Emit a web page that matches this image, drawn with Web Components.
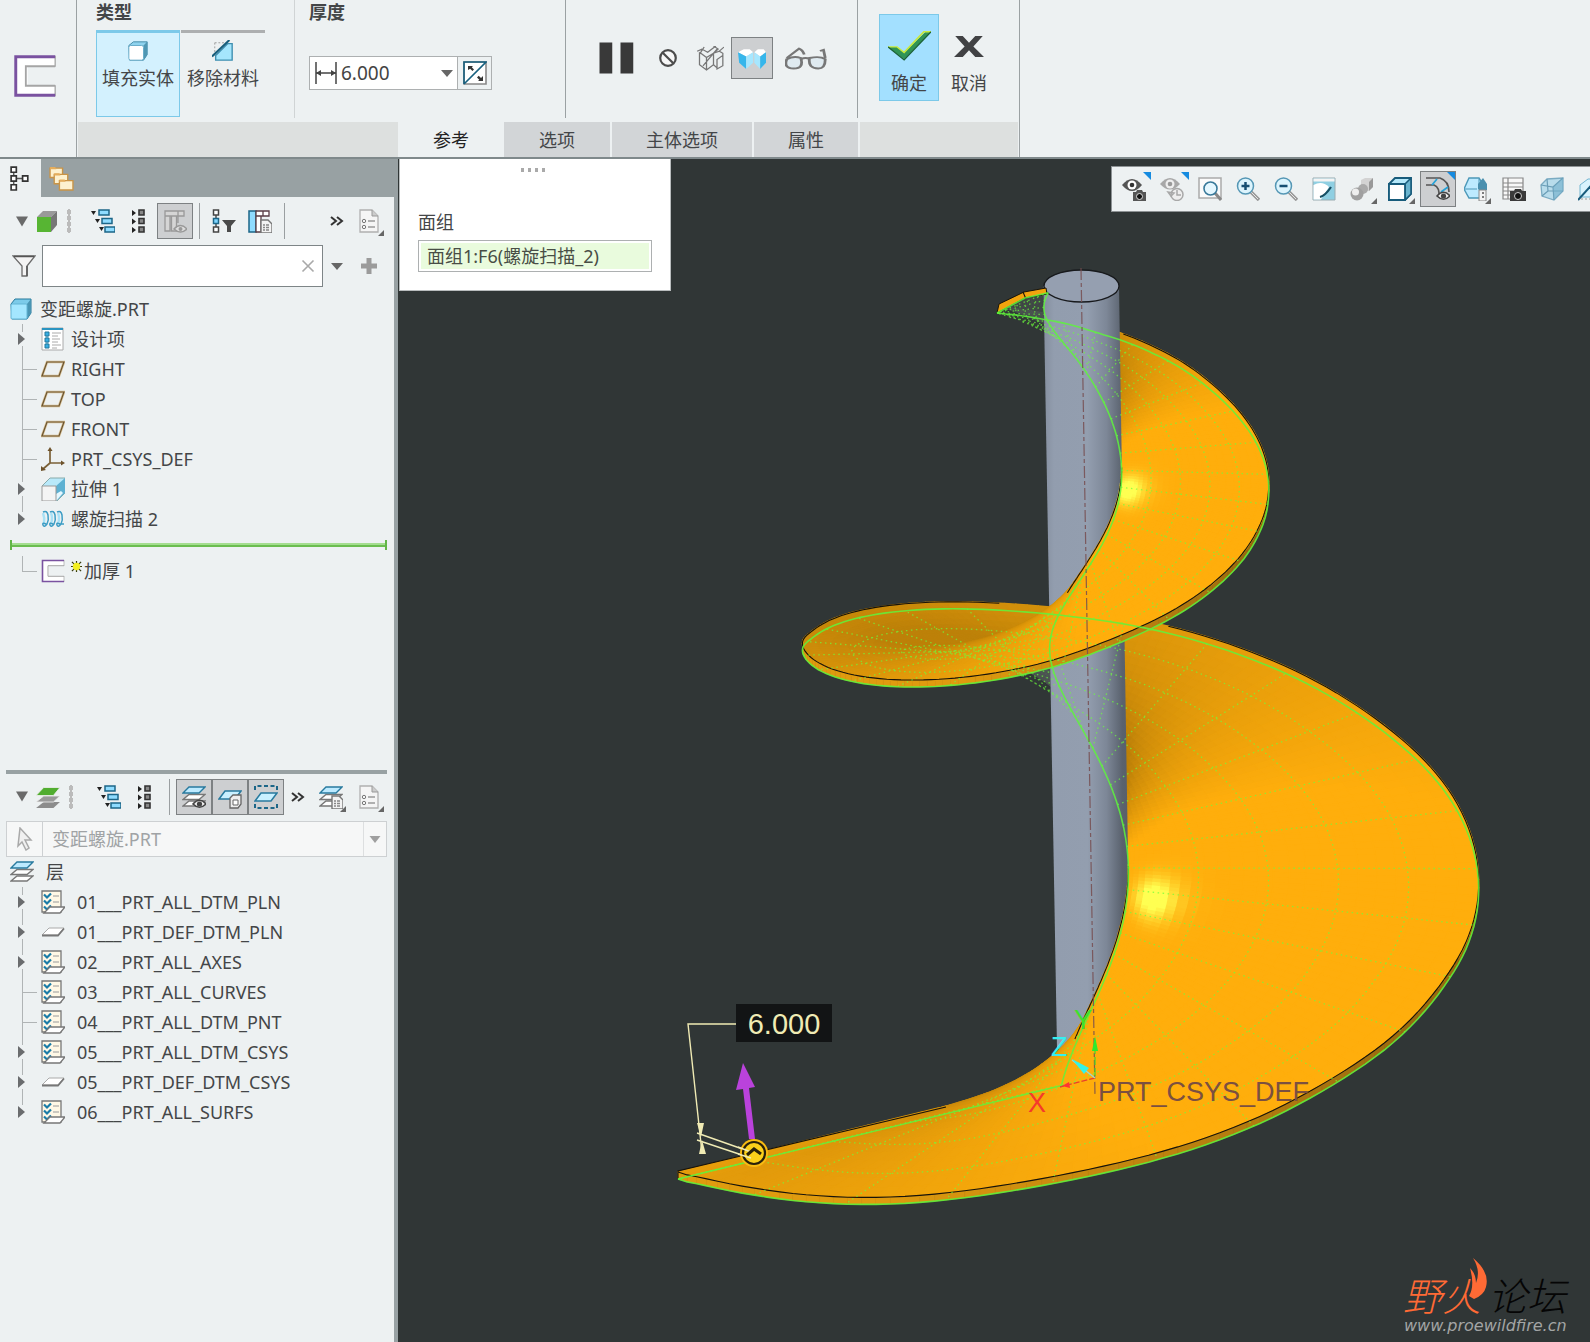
<!DOCTYPE html>
<html lang="zh-CN">
<head>
<meta charset="utf-8">
<title>变距螺旋.PRT</title>
<style>
	html, body {
		margin: 0;
		height: 100%;
	}

	body {
		font: 18px/24px "Noto Sans", "Noto Sans CJK SC", sans-serif;
		color: #444648;
		background: #edf1f2;
	}
</style>
</head>
<body>
<cad-app>
	<cad-ribbon slot="ribbon"></cad-ribbon>
	<cad-navigator slot="navigator"></cad-navigator>
	<cad-viewport slot="view"></cad-viewport>
</cad-app>

<script>
const LAYER_SHEETS = (top, edge) => `
	<path d="M1 21l6-5h16l-6 5z" fill="#fff" stroke="#777" stroke-width="1.4"/>
	<path d="M1 14.5l6-5h16l-6 5z" fill="#fff" stroke="#777" stroke-width="1.4"/>
	<path d="M1 8l6-6h16l-6 6z" fill="${top}" stroke="${edge}" stroke-width="1.4"/>`;

const DOC_BADGE = `
	<path d="M13 11h7l4 4v9H13z" fill="#f3f3f3" stroke="#777" stroke-width="1.4"/>
	<path d="M15 16h2m1 0h3m-6 2.5h2m1 0h3M15 21h2m1 0h3" stroke="#888" stroke-width="1.3"/>`;

const EYE_BADGE = `
	<path d="M11 19q6.5-7.5 13 0q-6.5 6.5-13 0z" fill="#eee" stroke="#444" stroke-width="1.6"/>
	<circle cx="17.5" cy="19" r="2.6" fill="#444"/>`;

const THICKEN = `
	<path d="M1 1h22v6H8v10h15v6H1z" fill="#fff"/>
	<path d="M23 6.7H7v10.6h16" fill="none" stroke="#a5a5a5"/>
	<path d="M23 1v6M23 17v6" stroke="#a5a5a5" stroke-width=".7"/>
	<path d="M23 1.5H1.5v21H23" fill="none" stroke="#7a52a0" stroke-width="1.6"/>`;

const ICONS = {
	thicken: THICKEN,
	solid: `
		<path d="M2 6l5-4h15v14l-4 6H3z" fill="#8fd3ee" stroke="#3f87a4"/>
		<path d="M18 6l4-4v14l-4 6z" fill="#4f97b3"/>
		<rect x="2" y="6" width="16" height="16" rx="2" fill="#fff" stroke="#62a9c6"/>`,
	remove: `
		<path d="M3 3h13M3 3v14" fill="none" stroke="#999" stroke-dasharray="2 2"/>
		<path d="M4 22V17L17 4h5v18z" fill="#a5e6fd" stroke="#3f8fb0" stroke-width="1.5"/>
		<path d="M0 18L19 0" stroke="#175d7b" stroke-width="2.2"/>`,
	thickness: `
		<path d="M2 1v22M22 1v22M2 12h20" fill="none" stroke="#444" stroke-width="1.5"/>
		<path d="M2 12l5-3v6zM22 12l-5-3v6z" fill="#444"/>`,
	flip: `
		<path d="M1 1h22v22H1z" fill="#fff" stroke="#888" stroke-width="1.6"/>
		<path d="M1 23V1h22L1 23" fill="none" stroke="#17607f" stroke-width="1.6"/>
		<path d="M5 5h5L8.8 6.2l2.2 2.2-1.6 1.6-2.2-2.2L5 9zM20 20h-5l1.3-1.3L14 16.5l1.7-1.7 2.3 2.3L20 15z" fill="#333"/>`,
	pause: `<path d="M1 1h8.5v22H1zM15 1h8.5v22H15z" fill="#393939"/>`,
	none: `
		<circle cx="12" cy="12" r="8.5" fill="#f7f7f7" stroke="#4c4c4c" stroke-width="2.4"/>
		<path d="M6.5 6.5l11 11" stroke="#4c4c4c" stroke-width="2.4"/>`,
	wire: `
		<path d="M1 5l4-2 5 3 7-6M3 6v12l6 5 6-5V7M9 11v12M3 6l6 5 6-4 4-4-4-3M15 7l5-2 3 2v12l-5 3v-9l5-4M15 7v11l3 3M6 19l12-16M7 1l-4 7M20 5l4-4" fill="none" stroke="#777" stroke-width="1.1"/>`,
	facets: `
		<path d="M0 6l5-3h5l3 3-6 4z" fill="#fff"/><path d="M0 6l7 4v12l-6-6z" fill="#36b6eb"/><path d="M7 10l6-4v10l-6 6z" fill="#a6e7ff"/>
		<path d="M14 6l3-3h5l2 3-5 4z" fill="#fff"/><path d="M14 6l5 4v12l-5-6z" fill="#a6e7ff"/><path d="M19 10l5-4v10l-5 6z" fill="#36b6eb"/>`,
	glasses: `
		<path d="M1 13q4-3 8-1 2 9-4 9t-4-8zM14 12q6-2 9 1 0 8-4 8-6 0-5-9z" fill="#dfeaf0" stroke="#777" stroke-width="1.6"/>
		<path d="M9 13q3-2 5 0M1 12l7-8q2 1 3 5M23 12l-1-7-2 1" fill="none" stroke="#777" stroke-width="1.6"/>`,
	check: `
		<path d="M0 13h5l4 4L21 2h3L9 22z" fill="#309456"/>
		<path d="M0 13h5l4 4L20 2h4" fill="none" stroke="#c9ea3d" stroke-width="1"/>
		<path d="M0 13l9 9.5L24 2" fill="none" stroke="#1b6135" stroke-width=".8"/>`,
	cross: `<path d="M1 2h6l5 6.5L17 2h6l-7.5 10L24 22h-7l-5-6.5L7 22H0l8.5-10z" fill="#414244"/>`,
	structure: `
		<path d="M5.5 5v14M5.5 12h12" stroke="#555" stroke-width="1.3"/>
		<path d="M3 1h5v5H3zM3 9.5h5v5H3zM3 18h5v5H3zM14 9.5h5v5h-5z" fill="#fff" stroke="#333" stroke-width="1.6"/>`,
	folders: `
		<path d="M1 2h12v9H1z" fill="#fdf1cf" stroke="#c99446" stroke-width="1.3"/><path d="M1 1h5l1 2H1z" fill="#e5ad5c"/>
		<path d="M5 8h13v9H5z" fill="#fdf1cf" stroke="#c99446" stroke-width="1.3"/><path d="M5 7h5l1 2H5z" fill="#e5ad5c"/>
		<path d="M10 14h13v9H10z" fill="#fdf1cf" stroke="#c99446" stroke-width="1.3"/><path d="M10 13h5l1 2h-6z" fill="#e5ad5c"/>`,
	caret: `<path d="M3 4h18L12 20z" fill="#6a6a6a"/>`,
	smallcaret: `<path d="M6 9h12l-6 7z" fill="#666"/>`,
	greencube: `
		<path d="M2 8l6-6h14l-6 6z" fill="#999"/><path d="M16 8l6-6v14l-6 7z" fill="#777"/>
		<path d="M2 8h14v15H2z" fill="#57b533"/>`,
	expand: `
		<path d="M0 2h5l-2.5 4zM4 10h5l-2.5 4zM8 18h5l-2.5 4z" fill="#222"/>
		<path d="M8 1h10v5H8zM11 9.5h10v5H11zM14 18h10v5H14z" fill="#8fdcff" stroke="#1c6688" stroke-width="1.5"/>`,
	collapse: `
		<path d="M5 1l4 3-4 3zM5 9.5l4 3-4 3zM5 18l4 3-4 3z" fill="#222"/>
		<path d="M12 1h5v5h-5zM12 9.5h5v5h-5zM12 18h5v5h-5z" fill="#888" stroke="#333" stroke-width="1.6"/>`,
	columns: `
		<path d="M2 2h19v5H2zM2 7h5v15H2zM8.5 7h5v15h-5zM15 2v12" fill="#d5d5d5" stroke="#999" stroke-width="1.3"/>
		<path d="M11 20q6.5-7 13 0q-6.5 6-13 0z" fill="#ddd" stroke="#999" stroke-width="1.5"/><circle cx="17.5" cy="20" r="2" fill="#999"/>`,
	treefilter: `
		<path d="M4 5v14" stroke="#444" stroke-width="1.4"/>
		<path d="M1.5 1h5v5h-5zM1.5 18h5v5h-5z" fill="#fff" stroke="#444" stroke-width="1.5"/><path d="M1.5 9.5h5v5h-5z" fill="#7fd6ff" stroke="#1c6688" stroke-width="1.5"/>
		<path d="M10 11h14l-5 6v6h-4v-6z" fill="#4a4a4a"/>`,
	treecolumns: `
		<path d="M1 2h7v21H1z" fill="#8fdcff" stroke="#1c6688" stroke-width="1.5"/>
		<path d="M8 2h13v5H8zM15 2v5M8 7v16h5V7" fill="#fff" stroke="#5a3d45" stroke-width="1.3"/>${DOC_BADGE}`,
	more: `<path d="M6 8l5 4-5 4M12 8l5 4-5 4" fill="none" stroke="#333" stroke-width="2"/>`,
	document: `
		<path d="M3 1h12l6 6v16H3z" fill="#f5f5f5" stroke="#b0b0b0" stroke-width="1.3"/><path d="M15 1v6h6" fill="#ccc" stroke="#999"/>
		<circle cx="7" cy="12" r="1.7" fill="none" stroke="#777"/><circle cx="7" cy="18" r="1.7" fill="none" stroke="#777"/>
		<path d="M11 12h7M11 18h7" stroke="#999" stroke-width="1.6"/>`,
	funnel: `<path d="M1 2h22l-8 10v10H10V12z" fill="#f4f4f4" stroke="#6b6b6b" stroke-width="1.3"/><path d="M2 2.5h20M15 12v10" stroke="#555" stroke-width="1.5"/>`,
	plus: `<path d="M9.5 4h5v5.5H20v5h-5.5V20h-5v-5.5H4v-5h5.5z" fill="#9b9b9b"/>`,
	clear: `<path d="M6 6l12 12M18 6L6 18" stroke="#a9a9a9" stroke-width="1.8"/>`,
	part: `
		<path d="M1 7l4-5h16v14l-4 6H2z" fill="#7ccbe9" stroke="#24789b"/>
		<path d="M17 7l4-5v14l-4 6z" fill="#4995b3"/><rect x="1" y="7" width="16" height="15" rx="1" fill="#a4e7ff" stroke="#62b5d5"/>`,
	design: `
		<path d="M1 1h21v22H1z" fill="#fff" stroke="#aaa"/><path d="M1 2h21" stroke="#2a94c1" stroke-width="2"/>
		<path d="M6 6v13" stroke="#2c8ab3"/><path d="M4 5h4v4H4zM4 11h4v4H4zM4 17h4v4H4z" fill="#36aee3" stroke="#24789b"/>
		<path d="M11 6h9M11 9h6M11 12h8M11 15h6M11 18h9M11 21h5" stroke="#aaa"/>`,
	plane: `<path d="M6 5h17l-5 14H1z" fill="none" stroke="#d8bf90" stroke-width="2.5"/><path d="M6 5h17l-5 14H1z" fill="none" stroke="#6b5533" stroke-width="1.2"/>`,
	csys: `
		<path d="M9 2v14h13M9 16l-7 6" fill="none" stroke="#7b6037" stroke-width="1.7"/>
		<path d="M9 0l2.5 4h-5zM24 16l-4-2.5v5zM0 24v-5l5 4z" fill="#6d522b"/>`,
	extrude: `
		<path d="M1 9l8-8h15v15l-8 8z" fill="#b9e9fa" stroke="#8aa"/><path d="M15 9l9-8v15l-9 8z" fill="#5eb1d2"/><path d="M15 17l5-3 2 2-7 8z" fill="#e6f8ff"/>
		<path d="M1 9h14v15H1z" fill="#f4f4f4" stroke="#999"/>`,
	helix: `
		<path d="M2 6q2 5 1 11M10 6q2 5 0 11M17 6q2 5 0 11" fill="none" stroke="#a8e1f6" stroke-width="2.4"/>
		<path d="M2 5q4-2 5 3t-1 9q-3 4-4 1t3-1M9 5q4-2 5 3t-1 9q-3 4-4 1t3-1M16 5q4-2 5 3t-1 9q-3 4-4 1t3-1l4 0" fill="none" stroke="#3d9dc5" stroke-width="1.5"/>`,
	spark: `<path d="M2 2l20 20M22 2L2 22M12 0v24M0 12h24" stroke="#33380a" stroke-width="2.6"/><circle cx="12" cy="12" r="8" fill="#f3ef21"/>`,
	greenlayers: `
		<path d="M1 23l7-6h15l-6 6z" fill="#8c8c8c"/><path d="M1 17l7-6h15l-6 6z" fill="#999" stroke="#eee" stroke-width=".8"/>
		<path d="M1 10.5l7-8h15l-6 8z" fill="#51ad30" stroke="#eee" stroke-width=".8"/>`,
	layers: LAYER_SHEETS('#bdeaff', '#287a9e'),
	layerseye: LAYER_SHEETS('#bdeaff', '#287a9e') + EYE_BADGE,
	layercube: `
		<path d="M1 14l6-8h16l-6 8z" fill="#c9f0ff" stroke="#287a9e" stroke-width="1.5"/>
		<path d="M12 13l3-3h8v9l-3 4h-8z" fill="#eee" stroke="#666" stroke-width="1.3"/><path d="M15 15h5v5h-5z" fill="#fff" stroke="#666"/>`,
	layerselect: `
		<path d="M1 16l6-8h16l-6 8z" fill="#c9f0ff" stroke="#287a9e" stroke-width="1.5"/>
		<path d="M1 5V1h22v4M1 19v4h22v-4" fill="none" stroke="#1c6688" stroke-width="2" stroke-dasharray="4 2.5"/>`,
	layersdoc: LAYER_SHEETS('#bdeaff', '#287a9e') + DOC_BADGE,
	cursor: `<path d="M7 1l11 12h-6l4 8-3 2-4-8-4 4z" fill="#f0f0f0" stroke="#a9a9a9" stroke-width="1.5"/>`,
	layerlist: `
		<path d="M1 1h19v21H1z" fill="#fff8e6" stroke="#777" stroke-width="1.3"/>
		<path d="M3 4.5l3 3 4-4M3 10.5l3 3 4-4M3 16.5l3 3 4-4" fill="none" stroke="#1a7ca8" stroke-width="2.2"/><path d="M12 6h6M12 12h6" stroke="#999" stroke-width="1.2"/>
		<path d="M3 23l6-6h15l-5 6z" fill="#fff" stroke="#777" stroke-width="1.3"/>`,
	layerplane: `<path d="M1 15l7-7h15l-6 7z" fill="#fff" stroke="#aaa"/><path d="M1 15.5h16l6-7" fill="none" stroke="#777" stroke-width="1.8"/>`,
	eyecamera: `
		<path d="M0 8q10-12 20 0-10 12-20 0z" fill="#555"/><circle cx="10" cy="8" r="4.5" fill="#fff"/><circle cx="10" cy="8" r="2.3" fill="#333"/>
		<path d="M11 15h3l1-2h5l1 2h3v9H11z" fill="#555"/><circle cx="17.5" cy="19.5" r="3" fill="#111" stroke="#ddd"/>`,
	eyehistory: `
		<path d="M0 7q10-12 20 0-10 11-20 0z" fill="#a8a8a8"/><circle cx="10" cy="7" r="4.5" fill="#eee"/><circle cx="10" cy="7" r="2.3" fill="#999"/>
		<circle cx="17" cy="17.5" r="6" fill="#eee" stroke="#a8a8a8" stroke-width="1.5"/><path d="M17 13v5h4M8 15l3 4 3-3z" fill="none" stroke="#a8a8a8" stroke-width="1.5"/>`,
	zoomfit: `
		<path d="M1 1h22v20H1z" fill="#fafafa" stroke="#aaa" stroke-width="1.5"/>
		<path d="M17 16l6 7" stroke="#888" stroke-width="3"/><circle cx="12.5" cy="11.5" r="6.5" fill="#e4f7ff" stroke="#38799a" stroke-width="1.6"/>`,
	zoomin: `
		<path d="M14 14l9 9" stroke="#999" stroke-width="3.5"/><path d="M15 15l7 7" stroke="#e6e6e6"/><circle cx="9.5" cy="9" r="8" fill="#dcf4fd" stroke="#5597b5" stroke-width="1.5"/>
		<path d="M9.5 5v8M5.5 9h8" stroke="#174f73" stroke-width="2.5"/>`,
	zoomout: `
		<path d="M14 14l9 9" stroke="#999" stroke-width="3.5"/><path d="M15 15l7 7" stroke="#e6e6e6"/><circle cx="9.5" cy="9" r="8" fill="#dcf4fd" stroke="#5597b5" stroke-width="1.5"/>
		<path d="M5.5 9h8" stroke="#174f73" stroke-width="2.5"/>`,
	repaint: `
		<path d="M1 1h22v22H1z" fill="#8fcfe2" stroke="#9aabb0"/><path d="M1.5 1.5h21v3h-21z" fill="#f4f4f4"/>
		<path d="M1.5 22.5V8Q10 3 17 10L9 22.5z" fill="#fff"/>
		<path d="M8 20q5-1 11-10" fill="none" stroke="#174f63" stroke-width="2.2"/>`,
	appearance: `
		<path d="M11 3l4-2h8v9l-4 4h-8z" fill="#d3d3d3"/><circle cx="13" cy="12" r="5" fill="#aaa"/><circle cx="7" cy="17" r="6.5" fill="#a0a0a0"/><circle cx="5.5" cy="15" r="3.5" fill="#eee"/>
		<path d="M19 5l4-4v9l-4 4z" fill="#999"/>`,
	shading: `
		<path d="M1 7l6-6h16v16l-6 6H1z" fill="#b4e8fa" stroke="#175b7b" stroke-width="1.8"/><path d="M17 7l6-6v16l-6 6z" fill="#6ab4cf" stroke="#175b7b" stroke-width="1.5"/>
		<path d="M1 7h16v16H1z" fill="#fff" stroke="#175b7b" stroke-width="1.8"/>`,
	annotations: `
		<path d="M0 1h14q9 3 9 14M0 8h8q6 2 5 13" fill="none" stroke="#555" stroke-width="1.7"/><path d="M11 2L6 8M22 10l-7 5" stroke="#25a2d8" stroke-width="1.8"/>${EYE_BADGE}`,
	section: `
		<path d="M0 12L5 1h10l7 11-6 9H5z" fill="#bdeaff" stroke="#4c98b8" stroke-width="1.4"/><path d="M0 12h13M15 2v10" stroke="#4c98b8"/>
		<path d="M14 12V7l5-6 4 6v6h-8z" fill="#4a8fae"/><path d="M15 13h7v11h-7z" fill="#f3f3f3" stroke="#888"/><path d="M18 16h2m-2 4h2" stroke="#555" stroke-width="1.5"/>`,
	tablecamera: `
		<path d="M1 1h20v21H1zM1 6h20M1 10h20M1 14h20M1 18h20M6 1v21" fill="#f8f8f8" stroke="#888" stroke-width="1.2"/>
		<path d="M8 14h4l1-2h6l1 2h4v10H8z" fill="#3a3a3a"/><circle cx="16" cy="19" r="3.5" fill="#111" stroke="#ccc"/>`,
	perspective: `
		<path d="M1 8l6-6 16-1v13l-9 9-12-4z" fill="#b8dceb" stroke="#7babc2" stroke-width="1.3"/><path d="M7 2l1 12 15 0M8 14l-6 5M1 8l12 2 10-9M13 10l1 13" fill="none" stroke="#6a9db6" stroke-width="1.2"/>
		<path d="M13 10l10-9v13l-9 9z" fill="#6faeca" opacity=".6"/>`,
	datum: `
		<path d="M2 8l8-6h14v18H2z" fill="#d9f3fd" stroke="#73b5d1"/><path d="M0 23L18 3" stroke="#185b7c" stroke-width="2"/><path d="M3 22h20" stroke="#999" stroke-dasharray="2 2"/>`
};

class CadElement extends HTMLElement {
	constructor() {
		super();
		this.attachShadow({ mode: 'open' });
	}

	connectedCallback() {
		this.shadowRoot.innerHTML = this.render();
	}
}

class CadIcon extends CadElement {
	render() {
		return `
			<style>
				:host { display: block; flex: none; width: var(--icon-width, 24px); height: var(--icon-height, 24px); }
				svg { display: block; width: 100%; height: 100%; }
			</style>
			<svg viewBox="0 0 24 24" preserveAspectRatio="none" aria-hidden="true">${ICONS[this.getAttribute('name')]}</svg>
		`;
	}
}

class CadTool extends CadElement {
	render() {
		return `
			<style>
				:host { display: block; flex: none; }
				button {
					position: relative;
					display: flex;
					align-items: center;
					justify-content: center;
					box-sizing: border-box;
					width: var(--tool-width, 36px);
					height: var(--tool-height, 36px);
					padding: 0;
					border: 1px solid transparent;
					background: none;
				}
				button[aria-pressed="true"] { border-color: #7d8183; background: #cdcfd1; }
				:host([corner]) button::after {
					content: "";
					position: absolute;
					right: 2px;
					bottom: 2px;
					border: 3px solid transparent;
					border-right-color: #666;
					border-bottom-color: #666;
				}
				:host([corner="new"]) button::after {
					top: 0;
					right: 0;
					bottom: auto;
					border: 4px solid transparent;
					border-top-color: #168be0;
					border-right-color: #168be0;
				}
			</style>
			<button type="button" title="${this.title}" aria-label="${this.title}" aria-pressed="${this.hasAttribute('pressed')}">
				<cad-icon name="${this.getAttribute('icon')}"></cad-icon>
			</button>
		`;
	}
}

class CadCommand extends CadElement {
	render() {
		return `
			<style>
				:host { display: block; width: 84px; height: 87px; --icon-width: 22px; --icon-height: 22px; }
				button {
					display: flex;
					flex-direction: column;
					align-items: center;
					box-sizing: border-box;
					width: 100%;
					height: 100%;
					padding: 7px 0 0;
					border: 0 solid #7cc9e9;
					border-top: 3px solid #adafb0;
					background: none;
					color: inherit;
					font: inherit;
					white-space: nowrap;
				}
				.label { margin-top: 4px; }
				:host([selected]) button {
					border-width: 3px 1px 1px;
					border-color: #7cc9e9;
					background: #d3f1fe;
				}
				:host([kind="confirm"]) { width: 60px; --icon-width: 43px; --icon-height: 33px; }
				:host([kind="confirm"]) button { padding-top: 14px; border: 1px solid transparent; }
				:host([kind="confirm"][selected]) button { border-color: #7cc9e9; background: #a3e0ff; }
				:host([kind="confirm"]) .label { margin-top: 9px; }
				:host([icon="cross"]) { --icon-width: 30px; --icon-height: 25px; }
				:host([icon="cross"]) button { padding-top: 19px; }
				:host([icon="cross"]) .label { margin-top: 12px; }
			</style>
			<button type="button" aria-pressed="${this.hasAttribute('selected')}">
				<cad-icon name="${this.getAttribute('icon')}"></cad-icon>
				<span class="label"><slot></slot></span>
			</button>
		`;
	}
}

class CadRibbon extends CadElement {
	render() {
		return `
			<style>
				:host { display: flex; border-bottom: 2px solid #7f898b; background: #edf1f2; }
				.feature {
					box-sizing: border-box;
					width: 77px;
					padding: 54px 0 0 13px;
					border-right: 1px solid #9ba1a3;
					--icon-width: 44px;
					--icon-height: 44px;
				}
				.dashboard { border-right: 1px solid #9ba1a3; padding: 0 1px; }
				.groups { display: flex; height: 122px; }
				section { box-sizing: border-box; height: 118px; border-right: 1px solid #9ba1a3; }
				section:last-child { border: 0; }
				h2 { margin: 0; font-size: 18px; line-height: 24px; font-weight: 700; }
				.type { padding: 0 29px 0 18px; border-color: #d0d4d5; }
				.choices { display: flex; gap: 1px; margin-top: 6px; }
				.thickness { padding: 0 73px 0 14px; }
				.field {
					display: flex;
					align-items: center;
					box-sizing: border-box;
					width: 183px;
					height: 34px;
					margin-top: 32px;
					border: 1px solid #adb0b1;
					background: #fff;
					--icon-width: 24px;
					--icon-height: 24px;
				}
				.field > cad-icon { margin-left: 4px; }
				.field input {
					flex: 1;
					min-width: 0;
					padding: 0 3px;
					border: 0;
					outline: 0;
					background: none;
					font: inherit;
					font-size: 19px;
					color: #444;
				}
				.field cad-tool { --tool-width: 20px; --tool-height: 32px; }
				.field cad-tool:last-child {
					border-left: 1px solid #adb0b1;
					background: #edf1f2;
					--tool-width: 33px;
				}
				.preview { display: flex; align-items: flex-start; padding: 37px 18px 0 33px; --tool-width: 42px; --tool-height: 42px; }
				.preview cad-tool { --icon-width: 28px; --icon-height: 25px; }
				.preview .pause { margin-right: 14px; --tool-width: 34px; --icon-width: 36px; --icon-height: 34px; }
				.preview .none { --icon-width: 22px; --icon-height: 22px; }
				.preview .glasses { --tool-width: 66px; --icon-width: 42px; --icon-height: 28px; }
				.confirm { display: flex; padding: 14px 19px 0 21px; }
				nav { display: flex; gap: 2px; height: 35px; }
				nav button {
					padding: 0;
					border: 0;
					background: #d2d5d7;
					color: inherit;
					font: inherit;
				}
				nav button[aria-selected="true"] { margin: 0 -2px; background: #edf1f2; color: #222; }
				nav span { background: #dde0df; }
				.lead { width: 320px; }
				.short { width: 106px; }
				.short:last-of-type { width: 104px; }
				.long { width: 140px; }
				.rest { flex: 1; }
			</style>
			<div class="feature"><cad-icon name="thicken"></cad-icon></div>
			<div class="dashboard">
				<div class="groups">
					<section class="type">
						<h2>类型</h2>
						<div class="choices">
							<cad-command icon="solid" selected>填充实体</cad-command>
							<cad-command icon="remove">移除材料</cad-command>
						</div>
					</section>
					<section class="thickness">
						<h2><label for="thickness">厚度</label></h2>
						<div class="field">
							<cad-icon name="thickness"></cad-icon>
							<input id="thickness" type="text" value="6.000">
							<cad-tool icon="smallcaret" title="厚度值"></cad-tool>
							<cad-tool icon="flip" title="反向"></cad-tool>
						</div>
					</section>
					<section class="preview">
						<cad-tool class="pause" icon="pause" title="暂停"></cad-tool>
						<cad-tool class="none" icon="none" title="无预览"></cad-tool>
						<cad-tool icon="wire" title="分离"></cad-tool>
						<cad-tool icon="facets" title="连接" pressed></cad-tool>
						<cad-tool class="glasses" icon="glasses" title="校验"></cad-tool>
					</section>
					<section class="confirm">
						<cad-command kind="confirm" icon="check" selected>确定</cad-command>
						<cad-command kind="confirm" icon="cross">取消</cad-command>
					</section>
				</div>
				<nav role="tablist">
					<span class="lead"></span>
					<button class="short" role="tab" aria-selected="true">参考</button>
					<button class="short" role="tab">选项</button>
					<button class="long" role="tab">主体选项</button>
					<button class="short" role="tab">属性</button>
					<span class="rest"></span>
				</nav>
			</div>
		`;
	}
}

class CadTreeItem extends CadElement {
	render() {
		return `
			<style>
				:host { display: flex; align-items: center; height: 30px; white-space: nowrap; }
				.rail { flex: none; width: 37px; height: 30px; margin-right: 4px; --line: linear-gradient(#b0b4b5, #b0b4b5); }
				.rail { background: var(--line) 22px 0 / 1px 30px no-repeat, var(--line) 22px 15px / 15px 1px no-repeat; }
				:host([expandable]) .rail { background: var(--line) 22px 0 / 1px 8px no-repeat, var(--line) 22px 22px / 1px 8px no-repeat; }
				:host([last]) .rail { background: var(--line) 22px 0 / 1px 15px no-repeat, var(--line) 22px 15px / 15px 1px no-repeat; }
				:host([last][expandable]) .rail { background: var(--line) 22px 0 / 1px 8px no-repeat; }
				:host([root]) .rail { width: 6px; background: none; }
				button {
					display: block;
					box-sizing: border-box;
					width: 7px;
					height: 12px;
					margin: 9px 0 0 18px;
					padding: 0;
					border: 6px solid transparent;
					border-left: 7px solid #6a6c6e;
					border-right: 0;
					background: none;
				}
				.label { margin-left: var(--label-gap, 6px); }
				.new { display: inline-block; vertical-align: 6px; --icon-width: 11px; --icon-height: 11px; margin-right: 2px; }
			</style>
			<span class="rail">${this.hasAttribute('expandable') ? '<button type="button" aria-label="展开"></button>' : ''}</span>
			<cad-icon name="${this.getAttribute('icon')}"></cad-icon>
			<span class="label">${this.hasAttribute('new') ? '<cad-icon class="new" name="spark"></cad-icon>' : ''}<slot></slot></span>
		`;
	}
}

class CadNavigator extends CadElement {
	render() {
		return `
			<style>
				:host { display: flex; flex-direction: column; box-sizing: border-box; width: 398px; border-right: 4px solid #98a1a3; background: #edf1f2; }
				.tabs { display: flex; height: 38px; background: #98a1a3; }
				.tabs cad-tool { --tool-width: 41px; --tool-height: 38px; --icon-width: 25px; --icon-height: 25px; }
				.tabs cad-tool:first-child { background: #edf1f2; }
				.model, .layers { flex: 1 1 0; min-height: 0; }
				.layers { --label-gap: 12px; }
				.bar { display: flex; align-items: center; padding: 6px 7px 6px 13px; }
				.bar > .caret { --icon-width: 16px; --icon-height: 15px; --tool-width: 18px; }
				.kind { margin-left: 4px; }
				.handle { width: 4px; height: 24px; margin: 0 14px 0 8px; background: radial-gradient(#bbb 2px, transparent 2px) 0 0 / 4px 6px; }
				hr { width: 1px; height: 36px; margin: 0 6px; border: 0; background: #9a9fa1; }
				.more { --tool-width: 28px; }
				.push { margin-left: auto; }
				.filter { display: flex; align-items: center; padding: 0 7px 7px 6px; }
				.search { display: flex; align-items: center; flex: 1; min-width: 0; box-sizing: border-box; height: 42px; border: 1px solid #7e8587; background: #fff; }
				.search input { flex: 1; min-width: 0; padding: 0 8px; border: 0; outline: 0; background: none; font: inherit; }
				.search cad-tool { --tool-width: 28px; --icon-width: 22px; --icon-height: 22px; }
				.filter > .history { --tool-width: 28px; }
				.insert {
					height: 10px;
					margin: 6px 7px 6px 10px;
					--cap: linear-gradient(#62b647, #62b647);
					background:
						var(--cap) left / 2px 10px no-repeat,
						var(--cap) right / 2px 10px no-repeat,
						linear-gradient(#a4dd90 40%, #6bbd50 40%) center / 100% 4px no-repeat;
				}
				.split { height: 4px; margin: 0 7px 0 6px; background: #98a1a3; }
				.layers .bar { padding-top: 5px; }
				.layers .kind { --icon-width: 26px; }
				.layers .handle { margin-right: 18px; }
				.layers .push { margin-right: 2px; }
				.active { display: flex; box-sizing: border-box; height: 36px; margin: 0 7px 0 6px; border: 1px solid #cdd0d2; background: #f6f7f7; }
				.active cad-tool { --tool-width: 35px; --tool-height: 34px; border-right: 1px solid #cdd0d2; }
				.pick { display: grid; flex: 1; }
				.pick > * { grid-area: 1 / 1; }
				.arrow { display: flex; align-items: center; justify-self: end; border-left: 1px solid #cdd0d2; opacity: .6; pointer-events: none; --icon-width: 22px; }
				select { appearance: none; width: 100%; padding: 0 9px; border: 0; background: none; font: inherit; color: #a0a3a5; opacity: 1; }
			</style>
			<div class="tabs">
				<cad-tool icon="structure" title="模型树"></cad-tool>
				<cad-tool icon="folders" title="文件夹浏览器"></cad-tool>
			</div>
			<div class="model">
				<div class="bar">
					<cad-tool class="caret" icon="caret" title="折叠"></cad-tool>
					<cad-icon class="kind" name="greencube"></cad-icon>
					<span class="handle"></span>
					<cad-tool icon="expand" title="全部展开"></cad-tool>
					<cad-tool icon="collapse" title="全部折叠"></cad-tool>
					<cad-tool icon="columns" title="树列" pressed></cad-tool>
					<hr>
					<cad-tool icon="treefilter" title="树过滤器"></cad-tool>
					<cad-tool icon="treecolumns" title="列设置"></cad-tool>
					<hr>
					<cad-tool class="more push" icon="more" title="更多"></cad-tool>
					<cad-tool icon="document" title="设置" corner="option"></cad-tool>
				</div>
				<div class="filter">
					<cad-tool icon="funnel" title="过滤"></cad-tool>
					<div class="search">
						<input type="text" aria-label="搜索">
						<cad-tool icon="clear" title="清除"></cad-tool>
					</div>
					<cad-tool class="history" icon="smallcaret" title="历史"></cad-tool>
					<cad-tool icon="plus" title="添加"></cad-tool>
				</div>
				<cad-tree-item icon="part" root>变距螺旋.PRT</cad-tree-item>
				<cad-tree-item icon="design" expandable>设计项</cad-tree-item>
				<cad-tree-item icon="plane">RIGHT</cad-tree-item>
				<cad-tree-item icon="plane">TOP</cad-tree-item>
				<cad-tree-item icon="plane">FRONT</cad-tree-item>
				<cad-tree-item icon="csys">PRT_CSYS_DEF</cad-tree-item>
				<cad-tree-item icon="extrude" expandable>拉伸 1</cad-tree-item>
				<cad-tree-item icon="helix" expandable last>螺旋扫描 2</cad-tree-item>
				<div class="insert"></div>
				<cad-tree-item icon="thicken" last new>加厚 1</cad-tree-item>
			</div>
			<div class="layers">
				<div class="split"></div>
				<div class="bar">
					<cad-tool class="caret" icon="caret" title="折叠"></cad-tool>
					<cad-icon class="kind" name="greenlayers"></cad-icon>
					<span class="handle"></span>
					<cad-tool icon="expand" title="全部展开"></cad-tool>
					<cad-tool icon="collapse" title="全部折叠"></cad-tool>
					<hr>
					<cad-tool icon="layerseye" title="层可见性" pressed></cad-tool>
					<cad-tool icon="layercube" title="项目层" pressed></cad-tool>
					<cad-tool icon="layerselect" title="选择层" pressed></cad-tool>
					<cad-tool class="more" icon="more" title="更多"></cad-tool>
					<cad-tool class="push" icon="layersdoc" title="层" corner="option"></cad-tool>
					<cad-tool icon="document" title="设置" corner="option"></cad-tool>
				</div>
				<div class="active">
					<cad-tool icon="cursor" title="选择"></cad-tool>
					<div class="pick">
						<select aria-label="活动模型" disabled><option>变距螺旋.PRT</option></select>
						<span class="arrow"><cad-icon name="smallcaret"></cad-icon></span>
					</div>
				</div>
				<cad-tree-item icon="layers" root>层</cad-tree-item>
				<cad-tree-item icon="layerlist" expandable>01___PRT_ALL_DTM_PLN</cad-tree-item>
				<cad-tree-item icon="layerplane" expandable>01___PRT_DEF_DTM_PLN</cad-tree-item>
				<cad-tree-item icon="layerlist" expandable>02___PRT_ALL_AXES</cad-tree-item>
				<cad-tree-item icon="layerlist">03___PRT_ALL_CURVES</cad-tree-item>
				<cad-tree-item icon="layerlist">04___PRT_ALL_DTM_PNT</cad-tree-item>
				<cad-tree-item icon="layerlist" expandable>05___PRT_ALL_DTM_CSYS</cad-tree-item>
				<cad-tree-item icon="layerplane" expandable>05___PRT_DEF_DTM_CSYS</cad-tree-item>
				<cad-tree-item icon="layerlist" expandable last>06___PRT_ALL_SURFS</cad-tree-item>
			</div>
		`;
	}
}

//	helix data: [angle in degrees, value, ...]
const
	START = -209,
	TIP = -135,
	END = 511,
	THICKNESS = 7,
	RULING_STEP = 720 / 52,
	OUTER = [
		[-135, 997, 313], [-114, 1030, 317], [-90, 1082, 328], [-65, 1147, 351], [-52, 1180, 367],
		[-38, 1213, 392], [-24, 1243, 422], [-12, 1260, 450], [0, 1268, 478], [12, 1267, 503],
		[29, 1257, 537], [43, 1237, 567], [55, 1207, 595], [70, 1162, 623], [79, 1130, 638],
		[88, 1093, 653], [99, 1050, 668], [108, 1013, 677], [119, 967, 684], [131, 920, 687],
		[142, 880, 686], [155, 840, 679], [166, 816, 669], [175, 805, 659], [182, 804, 651],
		[200, 817, 635], [216, 847, 621], [231, 893, 612], [248, 967, 609], [260, 1033, 613],
		[271, 1097, 620], [282, 1162, 631], [295, 1240, 655], [304, 1290, 675], [314, 1340, 702],
		[324, 1390, 737], [336, 1433, 777], [346, 1460, 814], [355, 1475, 853], [361, 1478, 880],
		[368, 1477, 907], [377, 1468, 943], [388, 1447, 980], [401, 1402, 1036], [415, 1333, 1084],
		[428, 1253, 1127], [440, 1171, 1156], [456, 1050, 1183], [467, 964, 1198], [479, 877, 1205],
		[485, 833, 1204], [495, 768, 1197], [504, 712, 1187], [511, 678, 1179]
	],
	AXIS = [
		[-209, 285], [-180, 308], [-135, 344], [-90, 383], [0, 472], [90, 556],
		[180, 650], [270, 757], [360, 870], [450, 990], [511, 1077]
	];

//	cubic interpolation through a table sorted by angle
function sample(table, a) {
	const last = table.length - 1;
	if (a <= table[0][0]) { return table[0][1]; }
	if (a >= table[last][0]) { return table[last][1]; }
	let i = 0;
	while (table[i + 1][0] < a) { i++; }
	const p0 = table[Math.max(i - 1, 0)], p1 = table[i], p2 = table[i + 1], p3 = table[Math.min(i + 2, last)];
	const h = p2[0] - p1[0], t = (a - p1[0]) / h, t2 = t * t, t3 = t2 * t;
	const m1 = (p2[1] - p0[1]) / (p2[0] - p0[0]) * h;
	const m2 = (p3[1] - p1[1]) / (p3[0] - p1[0]) * h;
	return (2 * t3 - 3 * t2 + 1) * p1[1] + (t3 - 2 * t2 + t) * m1 + (3 * t2 - 2 * t3) * p2[1] + (t3 - t2) * m2;
}

const rad = a => a * Math.PI / 180;
const dot = (a, b) => a[0] * b[0] + a[1] * b[1] + a[2] * b[2];
const height = a => sample(AXIS, a);
const radiusAt = a => 184 + 0.567 * a;
const ring = (a, r) => {
	const h = height(a);
	return [1081 + (h - 286) * 0.017 + r * Math.cos(rad(a)), h + 0.42 * r * Math.sin(rad(a))];
};
const inner = a => ring(a, 37.5);

//	how far the measured rim is from the ideal one, spread smoothly along it
const RIM_OFFSETS = OUTER.map(([a, x, y]) => {
	const p = ring(a, radiusAt(a));
	return [a, x - p[0], y - p[1]];
});

function outer(angle) {
	const a = Math.max(TIP, Math.min(END, angle));
	const spread = Math.min(8, 1 + Math.min(a - TIP, END - a) * 0.3);
	let w = 0, dx = 0, dy = 0;
	for (const [b, x, y] of RIM_OFFSETS) {
		const k = Math.exp(-Math.pow((a - b) / spread, 2) / 2) + 1e-9;
		w += k;
		dx += k * x;
		dy += k * y;
	}
	const p = ring(a, radiusAt(a));
	return [p[0] + dx / w, p[1] + dy / w];
}

const mix = (p, q, u) => [p[0] + (q[0] - p[0]) * u, p[1] + (q[1] - p[1]) * u];
const between = (a, u) => mix(inner(a), outer(a), u);
const path = points => 'M' + points.map(p => p[0].toFixed(1) + ' ' + p[1].toFixed(1)).join('L');
const lift = p => [p[0], p[1] - THICKNESS];

function trace(u, from, to, raised) {
	const points = [];
	for (let a = from; a < to + 2; a += 2) {
		const p = between(Math.min(a, to), u);
		points.push(raised ? lift(p) : p);
	}
	return path(points);
}

class CadModel extends CadElement {
	#shade(a, r) {
		const pitch = (height(a + 9) - height(a - 9)) / 18 * 57.3 / 0.9;
		const n = [-pitch * Math.sin(rad(a)), pitch * Math.cos(rad(a)), r];
		const len = Math.hypot(...n);
		const d = dot(n, [-0.4, 0.6, 0.69]) / len;
		const s = Math.min(1, 1.2 * Math.pow(Math.max(0, dot(n, [-0.27, 0.73, 0.63]) / len), 85));
		const k = Math.max(0.74, Math.min(1, 0.396 + 0.78 * d));
		return `rgb(${Math.round(255 * k)},${Math.round(174 * k + 81 * s)},${Math.round(12 * k + 70 * s)})`;
	}

	#surface() {
		const faces = [];
		const rings = 26, step = 2;
		for (let a = START; a < END; a += step) {
			const mid = a + step / 2;
			const sin = Math.sin(rad(mid));
			const radius = radiusAt(mid);
			const p0 = lift(inner(a)), q0 = lift(outer(a)), p1 = lift(inner(a + step)), q1 = lift(outer(a + step));
			for (let i = 0; i < rings; i++) {
				const u = Math.pow(i / rings, 1.6), v = Math.pow((i + 1) / rings, 1.6);
				const quad = [mix(p0, q0, u), mix(p0, q0, v), mix(p1, q1, v), mix(p1, q1, u)];
				const cross = (quad[1][0] - quad[0][0]) * (quad[3][1] - quad[0][1]) - (quad[1][1] - quad[0][1]) * (quad[3][0] - quad[0][0]);
				const r = 38 + (radius - 38) * (u + v) / 2;
				const below = mid > 180 && mid < 270 && quad[0][1] > 655;
				const hidden = mid < -80 || cross < 0 || below;
				const color = hidden ? '#59635f' : this.#shade(mid, r);
				faces.push({
					front: sin >= 0 && !hidden,
					depth: r * sin * 0.9 - height(mid) * 0.49,
					svg: `<path d="${path(quad)}Z" fill="${color}" ${hidden ? 'opacity=".5"' : `stroke="${color}"`}/>`
				});
			}
			if (sin > 0 && mid > 0) {
				const k = 0.6 + 0.28 * Math.min(1, Math.max(0, (mid % 360 - 40) / 80));
				const rim = [outer(a), outer(a + step), q1, q0];
				const color = `rgb(${Math.round(255 * k)},${Math.round(176 * k)},15)`;
				faces.push({
					front: true,
					depth: radius * sin * 0.9 - height(mid) * 0.49 - 4,
					svg: `<path d="${path(rim)}Z" fill="${color}" stroke="${color}" stroke-width=".6"/>`
				});
			}
		}
		faces.sort((f, g) => f.depth - g.depth);
		return {
			back: faces.filter(f => !f.front).map(f => f.svg).join(''),
			front: faces.filter(f => f.front).map(f => f.svg).join('')
		};
	}

	#mesh() {
		let d = '';
		for (let i = 0; i <= 52; i++) {
			const a = START + i * RULING_STEP;
			d += path([inner(a), outer(a)]);
		}
		for (let i = 1; i < 5; i++) { d += trace(i / 5, START, END); }
		return d;
	}

	render() {
		const surface = this.#surface();
		return `
			<style>
				:host { display: block; width: 100%; height: 100%; }
				svg { display: block; width: 100%; height: 100%; }
				text { font: 27px "Liberation Sans", sans-serif; }
				.value { font-size: 29px; }
				.faces { stroke-width: 1.5; stroke-linejoin: round; }
				.quilt { fill: none; stroke: #5ef53c; stroke-width: 1.6; opacity: .85; }
				.mesh { fill: none; stroke: #6cff3c; stroke-width: 1.3; stroke-dasharray: 1.5 3.5; opacity: .7; }
				.edge { fill: none; stroke: #17130a; stroke-width: 1.1; }
				.axis { stroke: #774e50; stroke-width: 1.2; stroke-dasharray: 12 3 4 3; opacity: .85; }
				.dim { fill: none; stroke: #f0ebb4; stroke-width: 1.4; }
			</style>
			<svg viewBox="398 159 1192 1183" preserveAspectRatio="xMidYMid meet" role="img" aria-label="变距螺旋">
				<defs>
					<linearGradient id="steel">
						<stop offset="0" stop-color="#858f9f"/><stop offset=".12" stop-color="#929dae"/><stop offset=".5" stop-color="#939eaf"/>
						<stop offset=".72" stop-color="#7d8797"/><stop offset=".9" stop-color="#5a626e"/><stop offset="1" stop-color="#565d68"/>
					</linearGradient>
				</defs>
				<g class="faces">${surface.back}</g>
				<path d="M1043.5 286L1057 1048q20 14 74 0L1119 286z" fill="url(#steel)"/>
				<ellipse cx="1081.5" cy="286" rx="37.5" ry="16" fill="#959fb0" stroke="#17191c" stroke-width="1.3"/>
				<g class="faces">${surface.front}</g>
				<path d="M997 313l2-9 25-12 22-4 1 6-22 4z" fill="#f2a30e" stroke="#17130a"/>
				<path class="edge" d="M1023 292l3 7"/>
				<path class="edge" d="${trace(1, -74, 254, true)}"/>
				<path class="edge" d="${trace(1, 283, END, true)}"/>
				<path class="edge" d="${trace(0, 2, 120, true)}"/>
				<path class="edge" d="${trace(0, 362, 480, true)}"/>
				<path class="edge" d="M678 1179v-8l268-64"/>
				<path class="mesh" d="${this.#mesh()}"/>
				<path class="quilt" d="${trace(1, TIP, END)}"/>
				<path class="quilt" d="${trace(0, START, END)}"/>
				<path class="quilt" d="M678 1179L1064 1085M997 313l28-15 22-5"/>
				<path class="axis" d="M1081 268L1095 1096"/>

				<path d="M1095 1078L1060 1087" stroke="#e8402c" stroke-width="1.3" stroke-dasharray="6 2"/><path d="M1062 1086l7-4 1 6z" fill="#f33"/>
				<path d="M1095 1078L1072 1060" stroke="#9fd9c9" stroke-width="1.5"/><path d="M1072 1059l17 9-5 6z" fill="#35f2e6"/>
				<path d="M1095 1076v-36" stroke="#44d62c" stroke-width="1.2" stroke-dasharray="8 3"/><path d="M1095 1036l3 15h-6z" fill="#2eea2c"/>
				<text x="1028" y="1112" fill="#f5392b">X</text>
				<text x="1074" y="1029" fill="#3ee02c">Y</text>
				<text x="1051" y="1056" fill="#36eef0">Z</text>
				<text x="1098" y="1101" fill="#7b5040">PRT_CSYS_DEF</text>

				<path class="dim" d="M736 1024h-48l14 129M697 1133l54 19M697 1140l54 18"/>
				<path d="M697 1123h7l-3 14zM699 1154h7l-4-14z" fill="#f0ebb4"/>
				<rect x="736" y="1004" width="96" height="38" fill="#121415"/>
				<text class="value" x="784" y="1034" text-anchor="middle" fill="#f0ebb4">6.000</text>
				<path d="M743 1063l12 24-6 1 6 51h-6l-6-50-7 1z" fill="#ba42dc"/>
				<circle cx="754" cy="1153" r="14" fill="#f9bc12"/>
				<circle cx="754" cy="1153" r="11" fill="#fbd01a" stroke="#29210a" stroke-width="2.2"/>
				<path class="dim" d="M738 1147l13 5M738 1154l13 4"/>
				<path d="M747 1155l7-6 7 5" fill="none" stroke="#29210a" stroke-width="3"/>
			</svg>
		`;
	}
}

class CadReferences extends CadElement {
	render() {
		return `
			<style>
				:host { display: flex; flex-direction: column; box-sizing: border-box; width: 272px; height: 132px; padding: 9px 18px 0; border: 1px solid #b9bdbe; border-top: 0; background: #fff; }
				.grip { width: 28px; height: 4px; margin: 0 auto; background: linear-gradient(90deg, #aaa 50%, transparent 50%) 0 0 / 7px 4px; }
				label { margin-top: 38px; }
				input { box-sizing: border-box; height: 32px; margin-top: 6px; padding: 0 8px 2px; border: 1px solid #adb0b1; outline: 2px solid #fff; outline-offset: -3px; background: #e9fbdd; color: #484d45; font: inherit; }
			</style>
			<span class="grip"></span>
			<label for="quilt">面组</label>
			<input id="quilt" type="text" readonly value="面组1:F6(螺旋扫描_2)">
		`;
	}
}

class CadViewToolbar extends CadElement {
	render() {
		return `
			<style>
				:host { display: flex; gap: 2px; box-sizing: border-box; height: 46px; padding: 4px; border: 1px solid #8d9294; background: #edf1f2; }
			</style>
			<cad-tool icon="eyecamera" title="视图" corner="new"></cad-tool>
			<cad-tool icon="eyehistory" title="上一视图" corner="new"></cad-tool>
			<cad-tool icon="zoomfit" title="重新调整"></cad-tool>
			<cad-tool icon="zoomin" title="放大"></cad-tool>
			<cad-tool icon="zoomout" title="缩小"></cad-tool>
			<cad-tool icon="repaint" title="重画"></cad-tool>
			<cad-tool icon="appearance" title="外观" corner="option"></cad-tool>
			<cad-tool icon="shading" title="显示样式" corner="option"></cad-tool>
			<cad-tool icon="annotations" title="注释显示" corner="new" pressed></cad-tool>
			<cad-tool icon="section" title="截面" corner="option"></cad-tool>
			<cad-tool icon="tablecamera" title="视图管理器"></cad-tool>
			<cad-tool icon="perspective" title="透视图"></cad-tool>
			<cad-tool icon="datum" title="基准显示"></cad-tool>
		`;
	}
}

class CadForumMark extends CadElement {
	render() {
		return `
			<style>
				:host { display: block; width: 184px; }
				svg { display: block; width: 100%; }
				.name { font: italic 300 39px "Noto Sans CJK SC", sans-serif; }
				.site { font: italic 16px "DejaVu Sans", sans-serif; fill: #a3a5a5; }
			</style>
			<svg viewBox="0 0 184 82">
				<text class="name" x="1" y="55" fill="#ff6a35">野火</text>
				<text class="name" x="86" y="55" fill="#050505">论坛</text>
				<path d="M71 2q17 14 13 29-2 8-12 12l-5-3q6-10 1-28 6 6 6 15 5-12-3-25z" fill="#ff6a35"/>
				<text class="site" x="2" y="75">www.proewildfire.cn</text>
			</svg>
		`;
	}
}

class CadViewport extends CadElement {
	render() {
		return `
			<style>
				:host { position: relative; display: block; min-width: 0; overflow: hidden; background: #303636; }
				cad-references { position: absolute; top: 0; left: 1px; }
				cad-view-toolbar { position: absolute; top: 7px; right: -23px; }
				cad-forum-mark { position: absolute; right: 4px; bottom: 4px; }
			</style>
			<cad-model></cad-model>
			<cad-references></cad-references>
			<cad-view-toolbar></cad-view-toolbar>
			<cad-forum-mark></cad-forum-mark>
		`;
	}
}

class CadApp extends CadElement {
	render() {
		return `
			<style>
				:host { display: grid; grid-template: auto minmax(0, 1fr) / auto minmax(0, 1fr); height: 100%; }
				slot[name="ribbon"] { display: block; grid-column: 1 / -1; }
				slot[name="navigator"], slot[name="view"] { display: grid; min-height: 0; }
			</style>
			<slot name="ribbon"></slot>
			<slot name="navigator"></slot>
			<slot name="view"></slot>
		`;
	}
}

customElements.define('cad-icon', CadIcon);
customElements.define('cad-tool', CadTool);
customElements.define('cad-command', CadCommand);
customElements.define('cad-ribbon', CadRibbon);
customElements.define('cad-tree-item', CadTreeItem);
customElements.define('cad-navigator', CadNavigator);
customElements.define('cad-model', CadModel);
customElements.define('cad-references', CadReferences);
customElements.define('cad-view-toolbar', CadViewToolbar);
customElements.define('cad-forum-mark', CadForumMark);
customElements.define('cad-viewport', CadViewport);
customElements.define('cad-app', CadApp);
</script>
</body>
</html>
